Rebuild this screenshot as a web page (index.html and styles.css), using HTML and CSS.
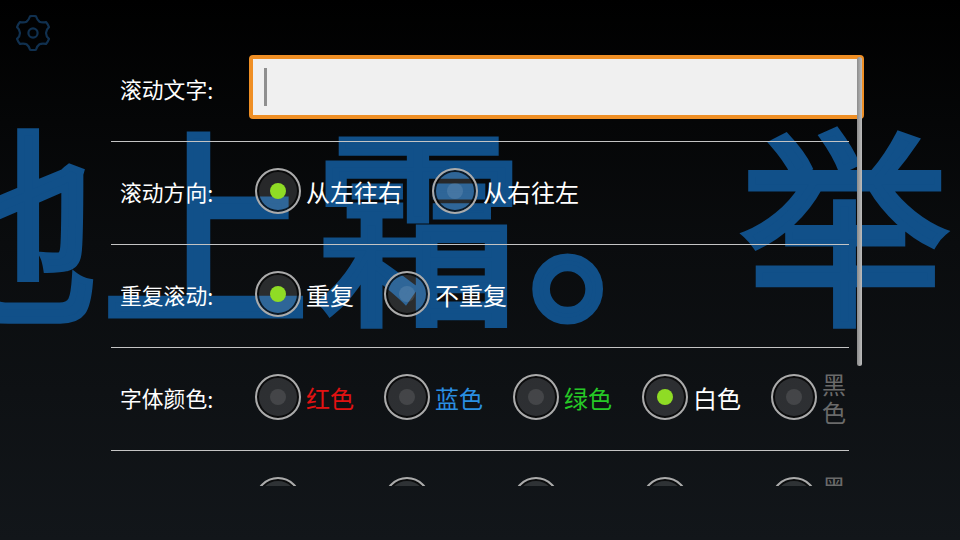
FILE: index.html
```html
<!DOCTYPE html>
<html lang="zh">
<head>
<meta charset="utf-8">
<title>滚动文字</title>
<link rel="stylesheet" href="styles.css">
</head>
<body>
<div class="screen">
  <div class="marquee">地上霜。举</div>
  <svg class="gear" viewBox="0 0 36 36" width="36" height="36" fill="none" stroke="#10304f" stroke-width="2.2" stroke-linejoin="round">
    <path d="M15.050 1.260Q18 .6 20.950 1.260Q22.400 5.400 24.500 6.740Q27 7.900 31.020 7.070Q33 9.400 33.970 12.190Q31 14.800 31 18Q31 21.200 33.970 23.810Q33 26.600 31.020 28.930Q27 28.100 24.500 29.260Q22.400 30.600 20.950 34.740Q18 35.400 15.050 34.740Q13.600 30.600 11.500 29.260Q9 28.100 4.980 28.930Q3 26.600 2.030 23.810Q5 21.200 5 18Q5 14.800 2.030 12.190Q3 9.400 4.980 7.070Q9 7.900 11.500 6.740Q13.600 5.400 15.050 1.260Z"/>
    <circle cx="18" cy="18" r="4.600"/>
  </svg>
  <div class="scroll">
    <div class="row">
      <div class="label">滚动文字<span class="colon">:</span></div>
      <div class="field"><span class="caret"></span></div>
    </div>
    <div class="row">
      <div class="label">滚动方向<span class="colon">:</span></div>
      <div class="options">
        <div class="opt"><span class="radio on"></span><span class="txt">从左往右</span></div>
        <div class="opt"><span class="radio"></span><span class="txt">从右往左</span></div>
      </div>
    </div>
    <div class="row">
      <div class="label">重复滚动<span class="colon">:</span></div>
      <div class="options">
        <div class="opt"><span class="radio on"></span><span class="txt">重复</span></div>
        <div class="opt"><span class="radio"></span><span class="txt">不重复</span></div>
      </div>
    </div>
    <div class="row">
      <div class="label">字体颜色<span class="colon">:</span></div>
      <div class="options">
        <div class="opt"><span class="radio"></span><span class="txt red">红色</span></div>
        <div class="opt"><span class="radio"></span><span class="txt blue">蓝色</span></div>
        <div class="opt"><span class="radio"></span><span class="txt green">绿色</span></div>
        <div class="opt"><span class="radio on"></span><span class="txt">白色</span></div>
        <div class="opt"><span class="radio"></span><span class="txt black">黑色</span></div>
      </div>
    </div>
    <div class="row">
      <div class="label">背景颜色<span class="colon">:</span></div>
      <div class="options">
        <div class="opt"><span class="radio"></span><span class="txt red">红色</span></div>
        <div class="opt"><span class="radio"></span><span class="txt blue">蓝色</span></div>
        <div class="opt"><span class="radio"></span><span class="txt green">绿色</span></div>
        <div class="opt"><span class="radio"></span><span class="txt">白色</span></div>
        <div class="opt"><span class="radio"></span><span class="txt black">黑色</span></div>
      </div>
    </div>
  </div>
  <div class="thumb"></div>
</div>
</body>
</html>
```
FILE: styles.css
```css
* { box-sizing: border-box; }
html, body { margin: 0; padding: 0; }
body { width: 960px; height: 540px; overflow: hidden; background: #000; }
.screen {
  position: relative;
  width: 960px;
  height: 540px;
  overflow: hidden;
  padding: 39px 0 54px 111px;
  background: linear-gradient(180deg, #000 0%, #0a0c0e 45%, #12161a 100%);
  font-family: "Noto Sans CJK SC", "Noto Sans", sans-serif;
  color: #fff;
}
.marquee {
  position: absolute;
  left: -112px;
  top: 67px;
  font-size: 209px;
  line-height: 300px;
  letter-spacing: 4px;
  font-weight: 400;
  -webkit-text-stroke: 7px #115089;
  color: #115089;
  white-space: nowrap;
}
.gear { position: absolute; left: 15px; top: 15px; }
.scroll { position: relative; width: 753px; height: 447px; overflow: hidden; }
.row {
  display: flex;
  align-items: center;
  width: 738px;
  height: 103px;
  padding-left: 9px;
  border-bottom: 1px solid #c4c4c4;
  flex-shrink: 0;
}
.label { width: 129px; flex: none; margin-top: -2px; font-size: 21.8px; line-height: 30px; white-space: nowrap; }
.colon { position: relative; top: 1px; }
.field {
  flex: none;
  width: 615px;
  height: 64px;
  margin-top: -6px;
  padding: 9px 0 0 11px;
  background: #f0f0f0;
  border: 4px solid #ef8f25;
  border-radius: 4px;
}
.caret { display: block; width: 3px; height: 38px; background: #8f8f8f; }
.options { display: flex; flex: 1; min-width: 0; gap: 30px; margin-left: 6px; margin-top: -4px; }
.opt { display: flex; align-items: center; gap: 5px; min-width: 0; }
.opt:last-child { margin-right: -30px; }
.radio {
  position: relative;
  display: block;
  flex: none;
  width: 46px;
  height: 46px;
  border: 2px solid #ababab;
  border-radius: 50%;
  background: rgba(255, 255, 255, 0.13);
  box-shadow: inset 0 0 0 2px rgba(0, 0, 0, 0.75);
}
.radio::after {
  content: "";
  position: absolute;
  left: 13px;
  top: 13px;
  width: 16px;
  height: 16px;
  border-radius: 50%;
  background: rgba(255, 255, 255, 0.11);
}
.radio.on::after { background: #8fdc25; }
.txt { position: relative; top: 1px; font-size: 24px; line-height: 28px; }
.red { color: #e21212; }
.blue { color: #2a8fe2; }
.green { color: #26c926; }
.black { color: #6a6a6a; width: 27px; }
.thumb {
  position: absolute;
  left: 857px;
  top: 57px;
  width: 5px;
  height: 309px;
  border-radius: 3px;
  background: linear-gradient(90deg, #8c8c8c, #bdbdbd);
}
```
